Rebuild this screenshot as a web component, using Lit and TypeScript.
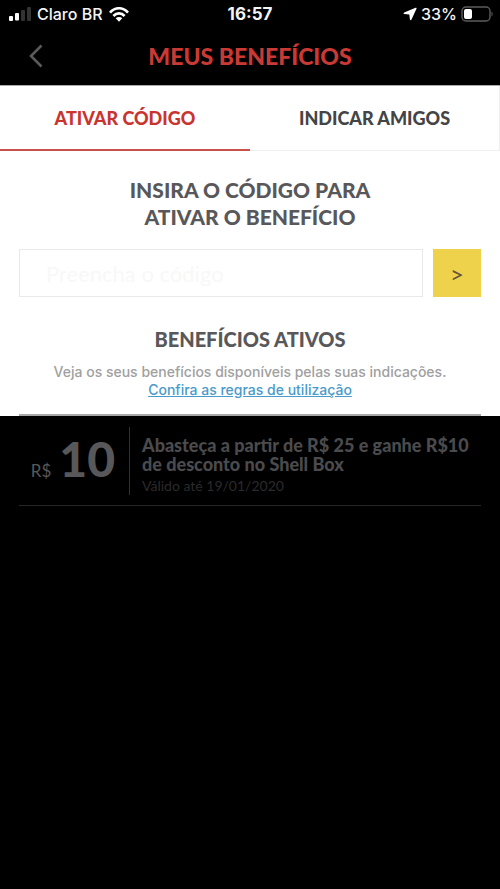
import { LitElement, html, css } from "lit";
import { customElement, state } from "lit/decorators.js";
import { classMap } from "lit/directives/class-map.js";

@customElement("status-bar")
class StatusBar extends LitElement {
  static styles = css`
    :host {
      display: grid;
      grid-template-columns: 1fr auto 1fr;
      align-items: center;
      height: 28px;
      padding: 0 7px;
      background: #000;
      color: #f4f4f4;
      font: 500 16px/20px Inter, "Liberation Sans", sans-serif;
    }
    .side {
      display: flex;
      align-items: center;
      gap: 6px;
    }
    .end {
      justify-content: flex-end;
      gap: 4px;
    }
    .time {
      font-size: 17px;
      font-weight: 700;
    }
    svg {
      display: block;
      flex: none;
    }
  `;

  render() {
    return html`
      <div class="side">
        <svg width="24" height="14" viewBox="0 0 24 14" aria-hidden="true">
          <rect x="2" y="9" width="4" height="5" rx="1" fill="#fff" />
          <rect x="8" y="6" width="4" height="7.500" rx="1" fill="#fff" />
          <rect x="14" y="3" width="4" height="11" rx="1" fill="#333" />
          <rect x="20" y="0" width="4" height="14" rx="1" fill="#333" />
        </svg>
        <span>Claro BR</span>
        <svg width="20" height="15" viewBox="0 0 20 15" aria-hidden="true">
          <g fill="none" stroke="#fff" stroke-width="2.6">
            <path d="M1 5.6C6-.2 14-.2 19 5.6" />
            <path d="M4.4 9C7.6 5.500 12.400 5.500 15.600 9" />
          </g>
          <path d="M10 14.800 6.700 11.300C8.600 9.700 11.400 9.700 13.300 11.300Z" fill="#fff" />
        </svg>
      </div>
      <span class="time">16:57</span>
      <div class="side end">
        <svg width="14" height="14" viewBox="0 0 14 14" aria-hidden="true">
          <path d="M12.600 .8 1.200 5.400C.2 5.900.4 7 1.500 7.100L6.300 7.500 6.900 12.300C7.100 13.400 8.100 13.500 8.500 12.600L13.500 1.700C13.800 1 13.300.500 12.600.8Z" fill="#fff" />
        </svg>
        <span>33%</span>
        <svg width="32" height="16" viewBox="0 0 32 16" aria-hidden="true">
          <rect x="1" y="1" width="28" height="14" rx="4" fill="none" stroke="#5c5c5c" stroke-width="1.4" />
          <rect x="3" y="3" width="8" height="10" rx="2" fill="#fff" />
          <path d="M30.500 5.500C32 6.200 32 9.800 30.500 10.500Z" fill="#5c5c5c" />
        </svg>
      </div>
    `;
  }
}

@customElement("benefit-card")
class BenefitCard extends LitElement {
  static properties = {
    amount: {},
    description: {},
    validity: {},
  };
  declare amount: string;
  declare description: string;
  declare validity: string;

  static styles = css`
    :host {
      display: flex;
      padding: 11px 0 10px;
      border-bottom: 1px solid #262626;
    }
    .value {
      box-sizing: border-box;
      flex: none;
      display: flex;
      align-items: baseline;
      justify-content: flex-end;
      gap: 8px;
      width: 111px;
      padding-right: 14px;
      border-right: 1px solid #303030;
      color: #58585a;
      line-height: 20px;
    }
    .currency {
      font-size: 17px;
    }
    .amount {
      font-size: 48px;
      line-height: 64px;
      font-weight: 900;
    }
    .details {
      flex: 1;
      min-width: 0;
      padding: 9px 0 0 12px;
    }
    p {
      margin: 0;
    }
    .description {
      max-width: 336px;
      color: #4b4b4d;
      font-size: 18px;
      line-height: 19px;
      font-weight: 900;
    }
    .validity {
      margin-top: 3px;
      color: #2b2b2b;
      font-size: 14px;
      line-height: 18px;
    }
  `;

  render() {
    return html`
      <div class="value">
        <span class="currency">R$</span>
        <span class="amount">${this.amount}</span>
      </div>
      <div class="details">
        <p class="description">${this.description}</p>
        <p class="validity">${this.validity}</p>
      </div>
    `;
  }
}

@customElement("app-root")
class AppRoot extends LitElement {
  @state() tab = 0;

  static styles = css`
    :host {
      display: flex;
      flex-direction: column;
      min-height: 100vh;
      background: #000;
      font-family: Lato, "Liberation Sans", sans-serif;
    }
    header {
      display: grid;
      grid-template-columns: 48px 1fr 48px;
      align-items: center;
      height: 55px;
      padding: 0 12px 2px;
      background: #000;
    }
    h1,
    h2,
    p {
      margin: 0;
      text-align: center;
    }
    h1 {
      color: #ca3a35;
      font-size: 23px;
      line-height: 28px;
      font-weight: 900;
    }
    button {
      margin: 0;
      padding: 0;
      border: 0;
      border-radius: 0;
      background: none;
      font-family: inherit;
      cursor: pointer;
    }
    .back {
      display: grid;
      place-items: center;
      height: 40px;
    }
    .sheet {
      background: #fff;
    }
    .tabs {
      display: grid;
      grid-template-columns: 1fr 1fr;
      border-top: 1px solid #aaa;
    }
    .tab {
      height: 65px;
      border: 1px solid #eee;
      border-width: 0 1px 1px 0;
      color: #444446;
      font-size: 18px;
      line-height: 24px;
      font-weight: 900;
    }
    .tab.active {
      border-width: 0 0 2px;
      border-color: #c9514d;
      color: #c9342e;
    }
    .content {
      padding: 25px 19px 0;
    }
    h2 {
      color: #58585a;
      font-size: 21px;
      line-height: 27px;
      font-weight: 900;
    }
    h2.section {
      font-size: 20px;
    }
    form {
      display: flex;
      gap: 10px;
      margin: 19px 0 29px;
    }
    input {
      box-sizing: border-box;
      flex: 1;
      min-width: 0;
      height: 48px;
      padding: 0 26px;
      border: 1px solid #e9e9e9;
      border-radius: 0;
      background: #fff;
      color: #58585a;
      font: 400 22px/26px Lato, "Liberation Sans", sans-serif;
    }
    input::placeholder {
      color: #f8f8f8;
      opacity: 1;
    }
    .submit {
      width: 48px;
      height: 48px;
      background: #eed24b;
      color: #65543a;
      font-size: 24px;
    }
    .note {
      margin-top: 10px;
      padding-bottom: 15px;
      color: #a0a0a0;
      font: 500 14px/18px Inter, "Liberation Sans", sans-serif;
    }
    .note a {
      color: #4a9aca;
    }
    .rule {
      height: 2px;
      background: #a8a8a8;
    }
    .benefits {
      padding: 0 19px;
    }
  `;

  render() {
    return html`
      <status-bar></status-bar>
      <header>
        <button class="back" aria-label="Voltar">
          <svg width="14" height="24" viewBox="0 0 14 24" aria-hidden="true">
            <path d="M12.500 1.500 2 12 12.500 22.500" fill="none" stroke="#5a5a5a" stroke-width="2.600" />
          </svg>
        </button>
        <h1>MEUS BENEFÍCIOS</h1>
      </header>
      <main>
        <div class="sheet">
          <div class="tabs" role="tablist">
            ${["ATIVAR CÓDIGO", "INDICAR AMIGOS"].map(
              (label, i) => html`<button
                role="tab"
                aria-selected=${this.tab === i}
                class=${classMap({ tab: true, active: this.tab === i })}
                @click=${() => (this.tab = i)}
              >${label}</button>`
            )}
          </div>
          <div class="content">
            <h2>INSIRA O CÓDIGO PARA<br />ATIVAR O BENEFÍCIO</h2>
            <form @submit=${(e: Event) => e.preventDefault()}>
              <input type="text" aria-label="Código" placeholder="Preencha o código" />
              <button class="submit" aria-label="Ativar">&gt;</button>
            </form>
            <h2 class="section">BENEFÍCIOS ATIVOS</h2>
            <p class="note">
              Veja os seus benefícios disponíveis pelas suas indicações.<br />
              <a href="#regras">Confira as regras de utilização</a>
            </p>
            <div class="rule"></div>
          </div>
        </div>
        <div class="benefits">
          <benefit-card
            amount="10"
            description="Abasteça a partir de R$ 25 e ganhe R$10 de desconto no Shell Box"
            validity="Válido até 19/01/2020"
          ></benefit-card>
        </div>
      </main>
    `;
  }
}
